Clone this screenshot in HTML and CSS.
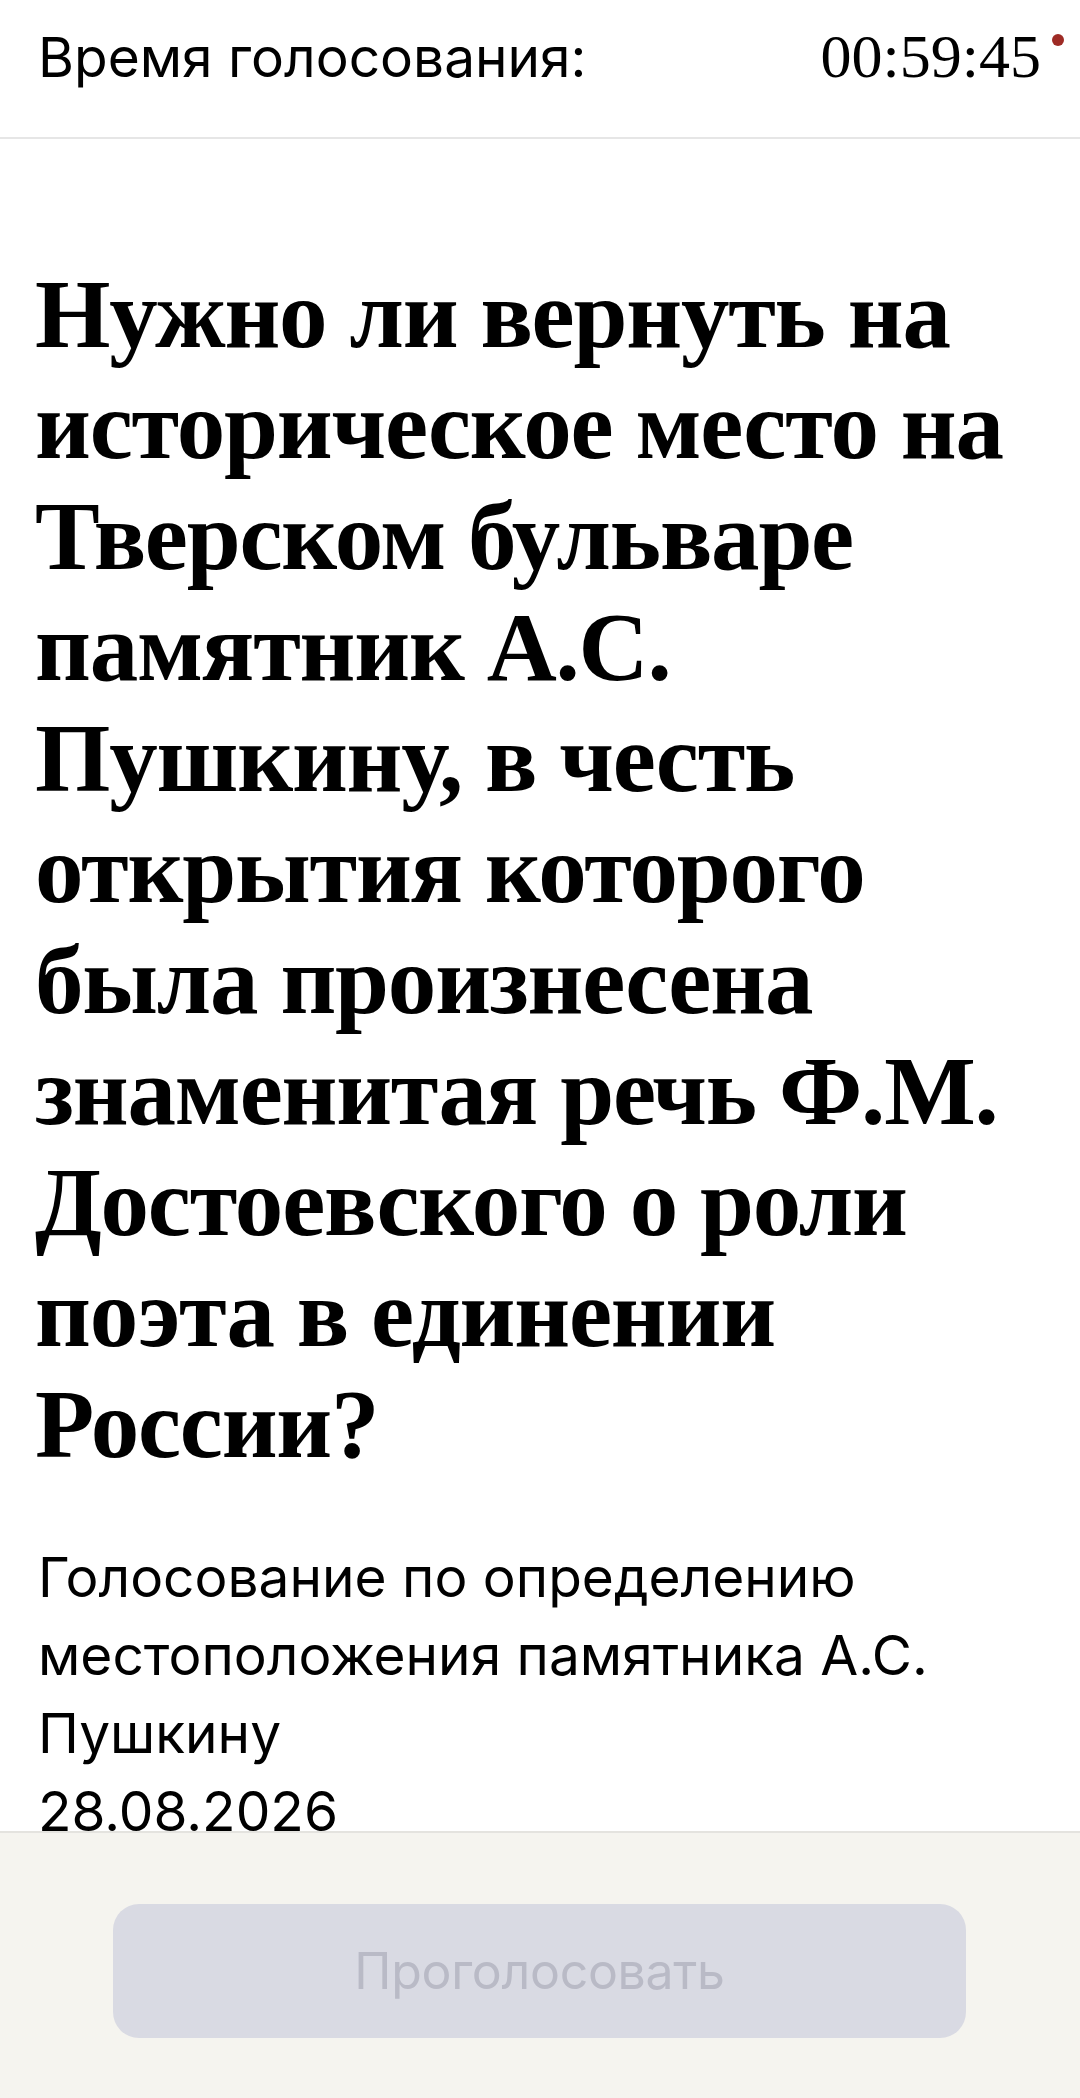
FILE: index.html
```html
<!DOCTYPE html>
<html lang="ru">
<head>
<meta charset="utf-8">
<title>Голосование</title>
<link rel="stylesheet" href="styles.css">
</head>
<body>
<div class="screen">
  <header class="topbar">
    <span class="topbar-label">Время голосования:</span>
    <span class="timer">00:59:45<span class="timer-dot"></span></span>
  </header>
  <main class="content">
    <h1 class="question">Нужно ли вернуть на<br>историческое место на<br>Тверском бульваре<br>памятник А.С.<br>Пушкину, в честь<br>открытия которого<br>была произнесена<br>знаменитая речь Ф.М.<br>Достоевского о роли<br>поэта в единении<br>России?</h1>
    <p class="desc">Голосование по определению<br>местоположения памятника А.С.<br>Пушкину<br>28.08.2026</p>
  </main>
  <footer class="actionbar">
    <button class="vote-btn" type="button" disabled>Проголосовать</button>
  </footer>
</div>
</body>
</html>
```
FILE: styles.css
```css
html, body {
  margin: 0;
  padding: 0;
  background: #ffffff;
}

.screen {
  position: relative;
  width: 1080px;
  height: 2098px;
  overflow: hidden;
  background: #ffffff;
  font-family: Inter, "Noto Sans", "Liberation Sans", sans-serif;
  color: #000000;
}

.topbar {
  display: flex;
  justify-content: space-between;
  align-items: baseline;
  box-sizing: border-box;
  height: 139px;
  padding: 26px 16px 0 38px;
  border-bottom: 2px solid #e6e6e6;
}

.topbar-label {
  font-size: 55px;
  line-height: 60px;
}

.timer {
  position: relative;
  padding-right: 23px;
  font-family: "Liberation Serif", "DejaVu Serif", serif;
  font-size: 62px;
  line-height: 60px;
}

.timer-dot {
  position: absolute;
  right: 0;
  top: 8px;
  width: 12px;
  height: 12px;
  border-radius: 50%;
  background: #9e2b25;
}

.content {
  padding: 120px 38px 0 35px;
}

.question {
  margin: 0;
  font-family: "Liberation Serif", "DejaVu Serif", serif;
  font-weight: 700;
  font-size: 97px;
  line-height: 111px;
  letter-spacing: -1.2px;
  white-space: nowrap;
  color: #000000;
}

.desc {
  margin: 58px 0 0 3px;
  font-size: 55px;
  line-height: 78px;
  white-space: nowrap;
  color: #000000;
}

.actionbar {
  position: absolute;
  left: 0;
  right: 0;
  bottom: 0;
  box-sizing: border-box;
  height: 267px;
  padding: 71px 114px 0 113px;
  background: #f5f4ef;
  border-top: 2px solid #e4e3df;
}

.vote-btn {
  display: block;
  width: 100%;
  height: 134px;
  border: none;
  border-radius: 26px;
  background: #d9dae3;
  color: #b9bac6;
  font-family: Inter, "Noto Sans", "Liberation Sans", sans-serif;
  font-size: 50px;
  letter-spacing: -0.3px;
}
```
